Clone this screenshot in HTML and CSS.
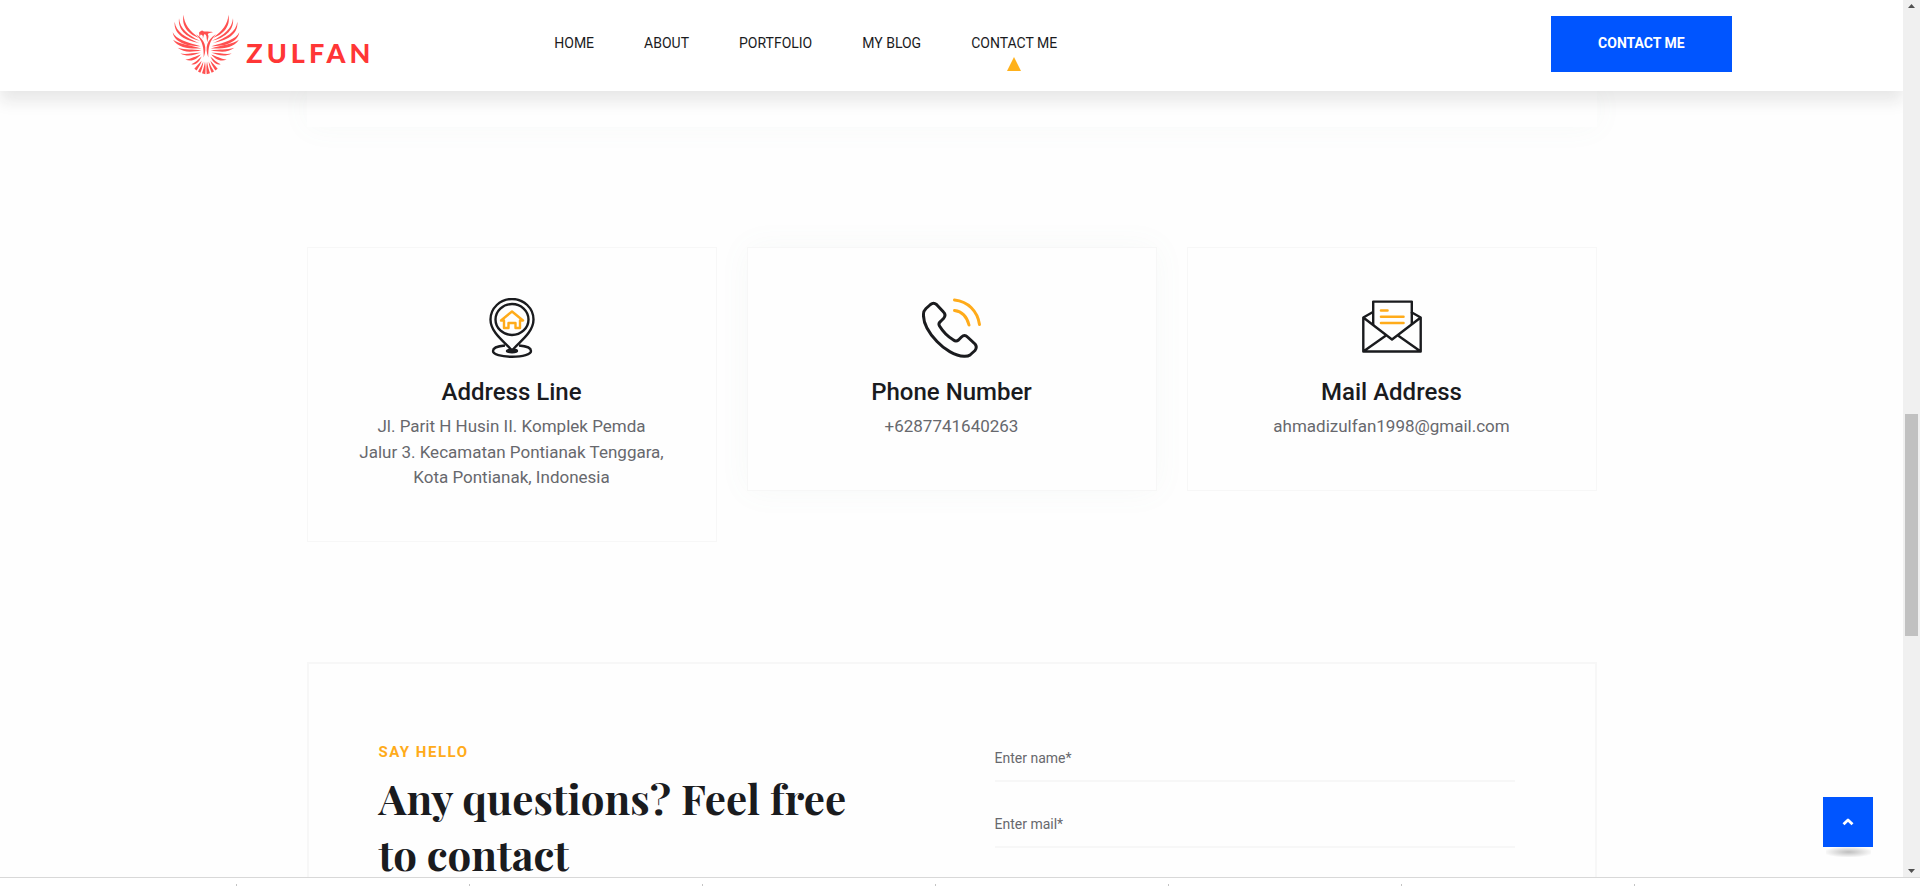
FILE: index.html
```html
<!DOCTYPE html>
<html lang="en">
<head>
<meta charset="utf-8">
<title>Zulfan - Contact Me</title>
<link rel="stylesheet" href="styles.css">
</head>
<body>
<div class="window">
  <div class="page">
    <header class="header">
      <div class="header-inner">
        <a class="logo" href="#home" aria-label="Zulfan">
          <svg class="logo-mark" viewBox="38 42 204 182" aria-hidden="true">
            <defs>
              <g id="wing">
                <path d="M73 44C74 72 90 92 120 114C96 106 64 84 73 44Z"/>
                <path d="M59 54C62 86 86 104 122 122C90 114 54 94 59 54Z"/>
                <path d="M46 65C50 96 78 112 120 129C80 122 42 104 46 65Z"/>
                <path d="M40 96C50 118 84 126 124 138C84 138 46 128 40 96Z"/>
                <path d="M41 119C60 133 90 134 126 145C94 146 58 146 41 119Z"/>
                <path d="M55 143C80 151 98 146 126 151C102 154 76 160 55 143Z"/>
                <path d="M63 160C86 164 104 156 124 158C108 163 86 172 63 160Z"/>
                <path d="M78 178C98 176 108 168 124 163C114 175 98 187 78 178Z"/>
                <path d="M96 192C108 188 116 178 127 169C120 184 110 197 96 192Z"/>
                <path d="M110 102C136 118 145 140 133 172C134 144 130 122 110 102Z"/>
                <path d="M127 182C119 190 112 198 105 206L112 211C119 200 124 192 127 182Z"/>
                <path d="M132 184C127 196 121 206 116 214L123 218C128 206 131 196 132 184Z"/>
                <path d="M137 184C135 198 131 210 128 219L138 222C139 208 139 196 137 184Z"/>
              </g>
            </defs>
            <use href="#wing"/>
            <use href="#wing" transform="translate(280 0) scale(-1 1)"/>
            <path d="M119 98C122 92 126 94 128 90C130 96 148 92 161 96C150 98 144 99 146 104C150 110 144 118 145 126C140 116 144 108 138 103C132 100 134 110 130 116C132 108 130 104 124 103L121 110Z"/>
          </svg>
          <span class="logo-text">ZULFAN</span>
        </a>
        <nav class="nav">
          <a class="nav-link" href="#home">HOME</a>
          <a class="nav-link" href="#about">ABOUT</a>
          <a class="nav-link" href="#portfolio">PORTFOLIO</a>
          <a class="nav-link" href="#blog">MY BLOG</a>
          <a class="nav-link active" href="#contact">CONTACT ME</a>
        </nav>
        <a class="header-button" href="#contact">CONTACT ME</a>
      </div>
    </header>

    <main class="container" id="contact">
      <div class="previous-panel"></div>

      <section class="cards">
        <article class="card">
          <svg class="card-icon" viewBox="0 0 60 60" fill="none" stroke="#1a1b1e" stroke-width="2.4" aria-hidden="true">
            <path d="M30 53C26 46 8.500 36 8.500 21.500A21.500 20.500 0 0 1 51.500 21.500C51.500 36 34 46 30 53Z" stroke-linejoin="round"/>
            <ellipse cx="30" cy="21.500" rx="16.500" ry="15.500"/>
            <path d="M23 47.500C15 48 11 50.500 11 53C11 56.500 19 58.800 30 58.800S49 56.500 49 53C49 50.500 45 48 37 47.500"/>
            <ellipse cx="30" cy="53" rx="5" ry="1.200"/>
            <path d="M30 13.500L41 22.500H38V30H33.500V25H26.500V30H22V22.500H19Z" stroke="#ffab1a" stroke-linejoin="round"/>
          </svg>
          <h3 class="card-title">Address Line</h3>
          <p class="card-text">Jl. Parit H Husin II. Komplek Pemda Jalur 3. Kecamatan Pontianak Tenggara, Kota Pontianak, Indonesia</p>
        </article>

        <article class="card raised">
          <svg class="card-icon" viewBox="0 0 60 60" fill="none" stroke="#1a1b1e" stroke-width="3" stroke-linecap="round" stroke-linejoin="round" aria-hidden="true">
            <path d="M8.500 6.500Q11.500 4 14.500 6.500L21.500 14Q24.500 17 21.500 20.500L18.500 23.500Q16 25.500 17.500 28Q23 37 31.500 42Q34 44 36.500 42L39.500 39Q42.500 36 45.500 39L53 46Q55.500 49 53 52.500L48 57Q46 58.500 42 58.300C33 58 22 51 15 43.500C6 34 1 25 1.500 16Q1.500 13 4 10.500Z"/>
            <path d="M32.500 2C46 3.500 55.500 13 57.500 26.500M32.500 12.500C40 13.500 45 19 47 27" stroke="#ffab1a"/>
          </svg>
          <h3 class="card-title">Phone Number</h3>
          <p class="card-text">+6287741640263</p>
        </article>

        <article class="card">
          <svg class="card-icon" viewBox="0 0 60 60" fill="none" stroke="#1a1b1e" stroke-width="2.400" stroke-linejoin="round" aria-hidden="true">
            <path d="M11.200 27V3.600H49.800V27"/>
            <path d="M11 14L1.300 19.500V53.500H58.700V19.500L49 14M1.300 19.500L30 41.500L58.700 19.500M1.300 53.500L24 37.500M58.700 53.500L36 37.500"/>
            <path d="M19 12.500H25.500M19 18.800H41.500M19 25H41.500" stroke="#ffab1a" stroke-width="2.600" stroke-linecap="round"/>
          </svg>
          <h3 class="card-title">Mail Address</h3>
          <p class="card-text">ahmadizulfan1998@gmail.com</p>
        </article>
      </section>

      <section class="contact-box">
        <div class="contact-intro">
          <p class="eyebrow">SAY HELLO</p>
          <h2 class="contact-title">Any questions? Feel free to contact</h2>
        </div>
        <form class="contact-form">
          <input class="field" type="text" placeholder="Enter name*" aria-label="Enter name">
          <input class="field" type="email" placeholder="Enter mail*" aria-label="Enter mail">
        </form>
      </section>
    </main>

    <button class="to-top" type="button" aria-label="Back to top">
      <svg width="12" height="8" viewBox="0 0 12 8" fill="none" stroke="#fff" stroke-width="2.800" stroke-linejoin="round" aria-hidden="true"><path d="M1.500 6.300L6 2L10.500 6.300"/></svg>
    </button>
  </div>

  <div class="scrollbar" aria-hidden="true">
    <svg width="7" height="4" viewBox="0 0 7 4" fill="#505050"><path d="M0 4L3.500 0L7 4Z"/></svg>
    <div class="scroll-track"><div class="scroll-thumb"></div></div>
    <svg width="7" height="4" viewBox="0 0 7 4" fill="#505050"><path d="M0 0L3.500 4L7 0Z"/></svg>
  </div>

  <div class="downloads-bar" aria-hidden="true">
    <span></span><span></span><span></span><span></span><span></span><span></span><span></span>
  </div>
</div>
</body>
</html>
```
FILE: styles.css
```css
* {
  box-sizing: border-box;
}

body {
  margin: 0;
  background: #fff;
  color: #1a1b1e;
  font-family: Roboto, "Liberation Sans", sans-serif;
  overflow: hidden;
}

a {
  color: inherit;
  text-decoration: none;
}

h2,
h3,
p {
  margin: 0;
}

.window {
  display: grid;
  grid-template-columns: minmax(0, 1fr) 17px;
  grid-template-rows: minmax(0, 1fr) 9px;
  height: 100vh;
}

.page {
  position: relative;
  overflow: hidden;
  background: #fefefe;
}

/* Header */
.header {
  position: relative;
  z-index: 2;
  background: #fff;
  box-shadow: 0 10px 15px rgba(25, 25, 25, 0.1);
}

.header-inner {
  display: flex;
  align-items: center;
  width: 82%;
  height: 91px;
  margin: 0 auto;
  padding-bottom: 3px;
}

.logo {
  display: flex;
  align-items: center;
  gap: 6px;
  flex: 0 0 383px;
  padding-left: 1px;
  color: #ff3636;
}

.logo-mark {
  width: 68px;
  height: 61px;
  fill: #ff5050;
}

.logo-text {
  font: 900 27px/36px Lato, sans-serif;
  letter-spacing: 4px;
  padding-top: 18px;
}

.nav {
  display: flex;
  gap: 50px;
  padding-bottom: 2px;
}

.nav-link {
  position: relative;
  font-size: 14px;
  line-height: 20px;
}

.nav-link.active::after {
  content: "";
  position: absolute;
  top: 24px;
  left: 50%;
  margin-left: -7px;
  border: solid transparent;
  border-width: 0 7px 14px;
  border-bottom-color: #ffb11b;
}

.header-button {
  margin-left: auto;
  padding: 17px 47px 19px;
  background: #0055ff;
  color: #fff;
  font-size: 14px;
  font-weight: 700;
  line-height: 20px;
}

/* Content */
.container {
  max-width: 1290px;
  margin: 0 auto;
}

.previous-panel {
  height: 36px;
  background: #fefefe;
  box-shadow: 0 0 30px rgba(110, 150, 140, 0.05);
}

.cards {
  display: grid;
  grid-template-columns: repeat(3, minmax(0, 1fr));
  align-items: start;
  gap: 30px;
  margin-top: 120px;
}

.card {
  padding: 50px;
  border: 1px solid #f7f7f7;
  text-align: center;
}

.card.raised {
  background: #fefefe;
  box-shadow: 0 0 30px rgba(110, 150, 140, 0.05);
}

.card-icon {
  display: block;
  width: 60px;
  height: 60px;
  margin: 0 auto 20px;
}

.card-title {
  font-size: 24px;
  font-weight: 500;
  line-height: 28px;
}

.card-text {
  margin-top: 8px;
  color: #67686d;
  font-size: 17px;
  line-height: 1.5;
}

.contact-box {
  display: grid;
  grid-template-columns: minmax(0, 1fr) minmax(0, 1fr);
  gap: 96px;
  margin-top: 120px;
  padding: 72px 80px 80px 70px;
  border: 2px solid #f7f7f7;
}

.contact-intro {
  padding: 4px 24px 0 0;
}

.eyebrow {
  color: #ffab1a;
  font-size: 15px;
  font-weight: 700;
  line-height: 24px;
  letter-spacing: 0.1em;
}

.contact-title {
  margin-top: 6px;
  font: 700 42px/56px "Playfair Display", "Liberation Serif", serif;
}

.contact-form {
  display: flex;
  flex-direction: column;
  gap: 20px;
}

.field {
  width: 100%;
  height: 46px;
  padding: 0;
  border: 0;
  border-bottom: 2px solid #f7f7f7;
  background: transparent;
  color: #67686d;
  font: 400 14px/20px Roboto, sans-serif;
}

.field::placeholder {
  color: #67686d;
}

.to-top {
  position: absolute;
  right: 30px;
  bottom: 30px;
  z-index: 3;
  display: grid;
  place-items: center;
  width: 50px;
  height: 50px;
  padding: 0;
  border: 0;
  background: #0055ff;
}

.to-top::after {
  content: "";
  position: absolute;
  top: 50px;
  left: 5%;
  width: 90%;
  height: 10px;
  background: radial-gradient(ellipse at center, rgba(0, 0, 0, 0.25) 0%, rgba(0, 0, 0, 0) 80%);
}

/* Browser chrome */
.scrollbar {
  display: flex;
  flex-direction: column;
  align-items: center;
  padding: 4px 2px;
  background: #f0f0f0;
}

.scroll-track {
  flex: 1;
  width: 13px;
  padding: 406px 0 233px;
  display: flex;
}

.scroll-thumb {
  flex: 1;
  background: #c1c1c1;
}

.downloads-bar {
  grid-column: 1 / -1;
  display: flex;
  align-items: flex-end;
  padding-left: 4px;
  border-top: 1px solid #d8d8d8;
  background: #fff;
}

.downloads-bar span {
  width: 233px;
  height: 2px;
  border-right: 1px solid #c4c4c4;
}
```
